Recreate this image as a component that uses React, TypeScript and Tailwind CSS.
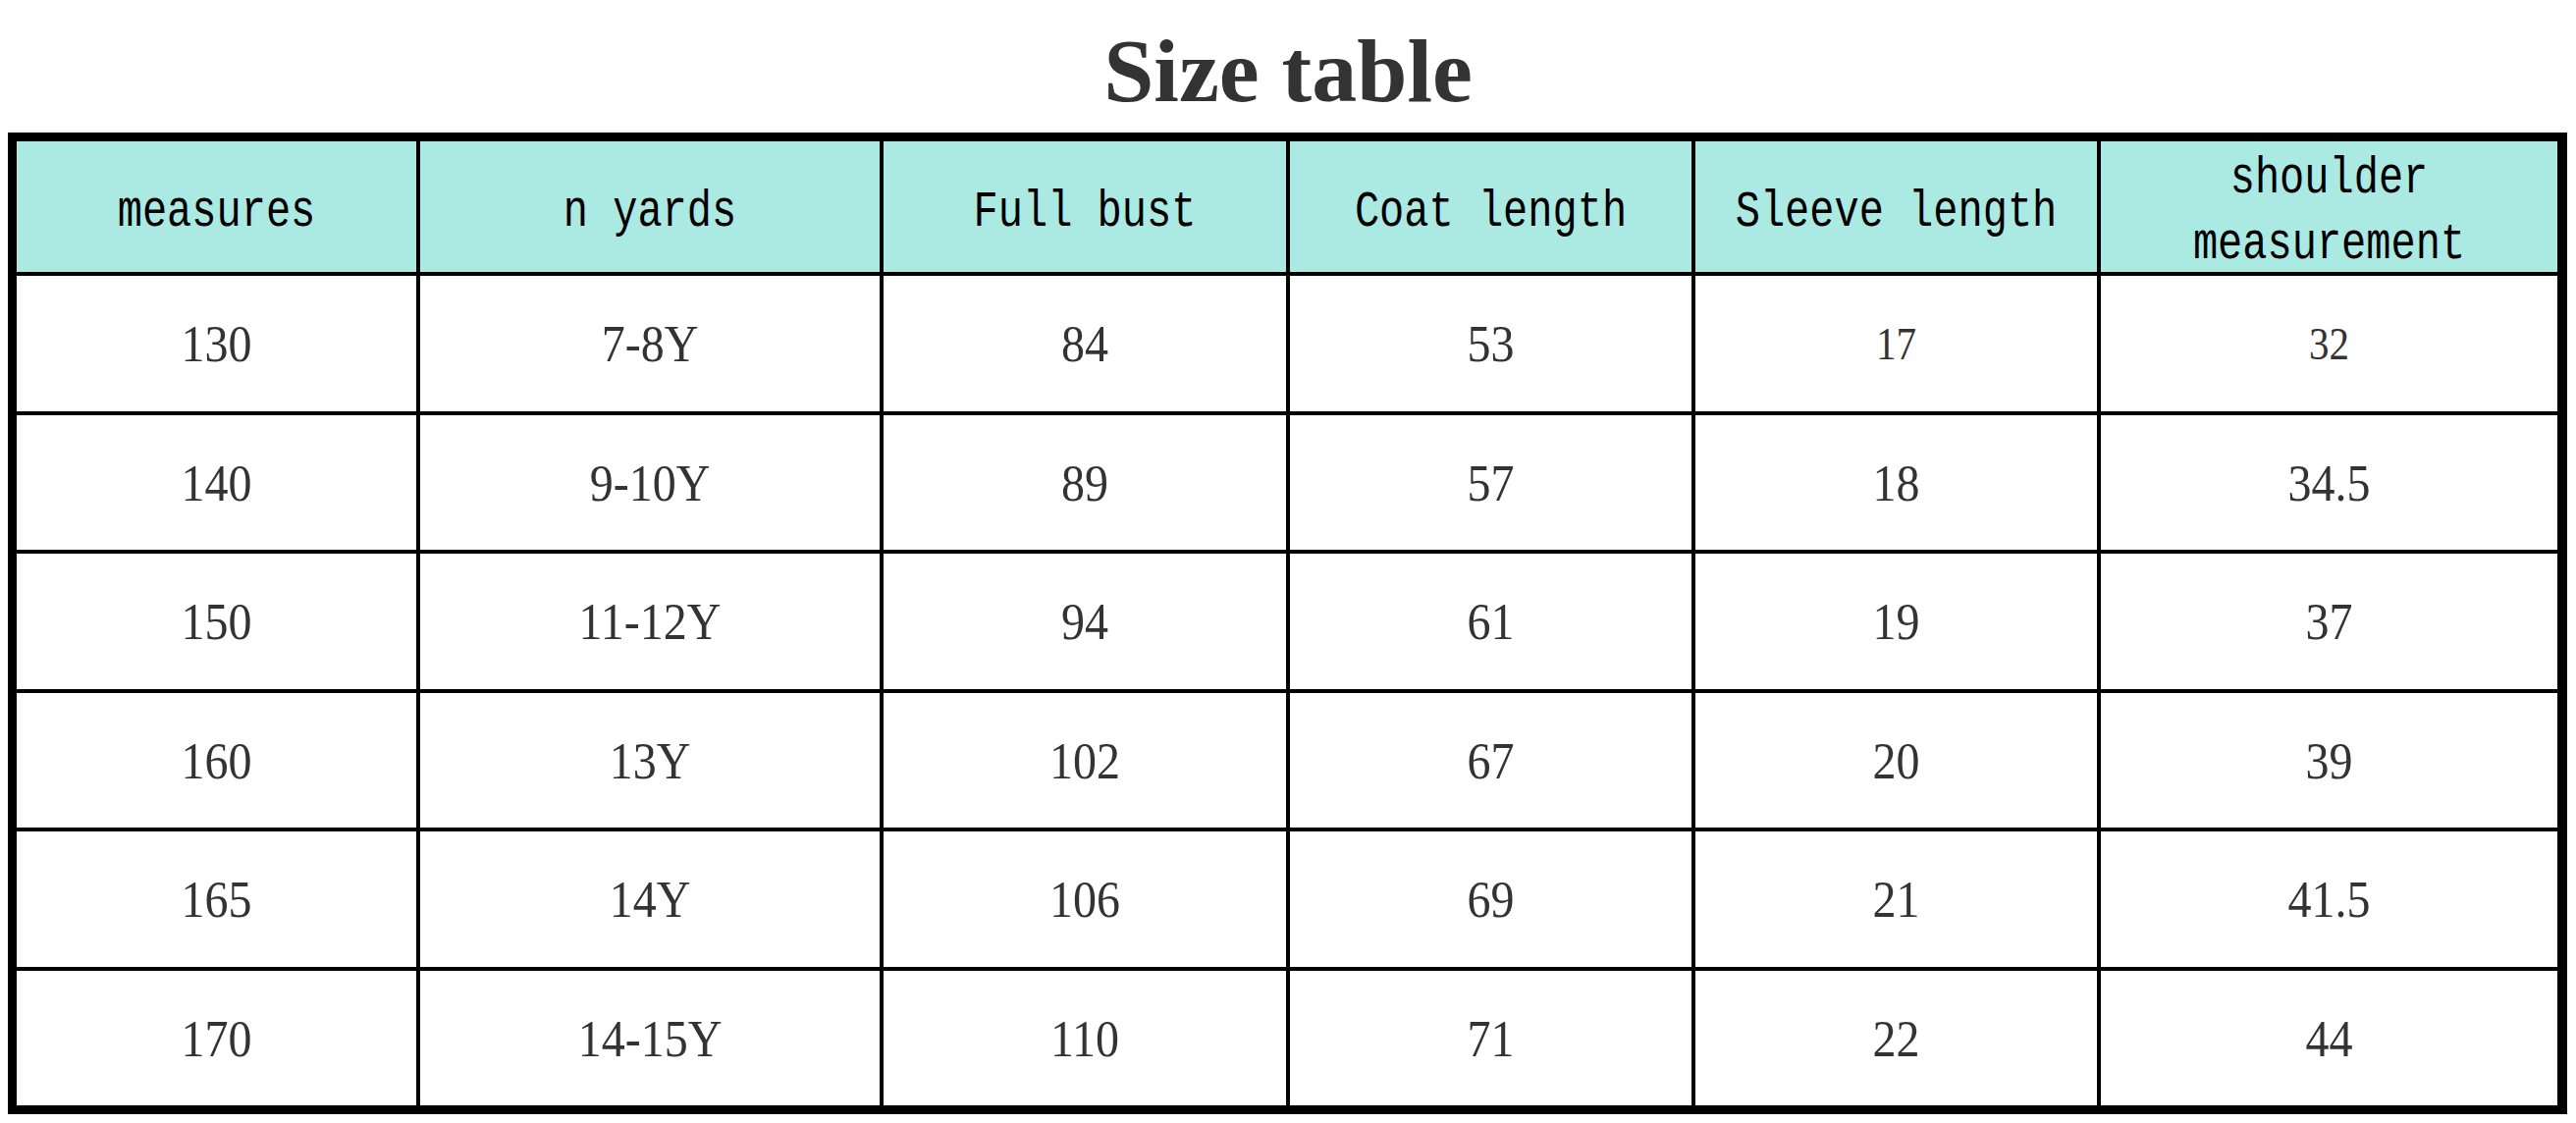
import React from "react";

const headers = [
  "measures",
  "n yards",
  "Full bust",
  "Coat length",
  "Sleeve length",
  "shoulder measurement",
];

const rows: string[][] = [
  ["130", "7-8Y", "84", "53", "17", "32"],
  ["140", "9-10Y", "89", "57", "18", "34.5"],
  ["150", "11-12Y", "94", "61", "19", "37"],
  ["160", "13Y", "102", "67", "20", "39"],
  ["165", "14Y", "106", "69", "21", "41.5"],
  ["170", "14-15Y", "110", "71", "22", "44"],
];

const App: React.FC = () => {
  return (
    <div className="w-[2624px] h-[1144px] bg-white overflow-hidden">
      <div className="h-[135px] pt-[26px] text-center">
        <h1 className="font-['Liberation_Serif',serif] font-bold text-[92px] leading-none text-[#333333]">
          Size table
        </h1>
      </div>

      <div className="ml-[8px] w-[2607px] border-[9px] border-r-[10px] border-black bg-black grid grid-cols-[407px_468px_410px_409px_409px_465px] grid-rows-[133px_138px_137px_138px_137px_138px_137px] gap-[4px]">
        {headers.map((h) => (
          <div
            key={h}
            className="bg-[#abe9e3] flex items-center justify-center text-center px-4 pt-[10px]"
          >
            <span className="inline-block scale-y-[1.24] font-['Liberation_Mono',monospace] text-[42px] leading-[54px] text-black">
              {h}
            </span>
          </div>
        ))}

        {rows.map((row, r) =>
          row.map((cell, c) => {
            // the first row's last two figures are set smaller in the picture
            const small = r === 0 && c >= 4;
            return (
              <div
                key={r + "-" + c}
                className="bg-white flex items-center justify-center"
              >
                <span
                  className={
                    small
                      ? "inline-block scale-y-[1.12] font-['Liberation_Serif',serif] text-[41px] leading-none text-[#333333]"
                      : "inline-block scale-y-[1.12] font-['Liberation_Serif',serif] text-[48px] leading-none text-[#333333]"
                  }
                >
                  {cell}
                </span>
              </div>
            );
          })
        )}
      </div>
    </div>
  );
};

export default App;
